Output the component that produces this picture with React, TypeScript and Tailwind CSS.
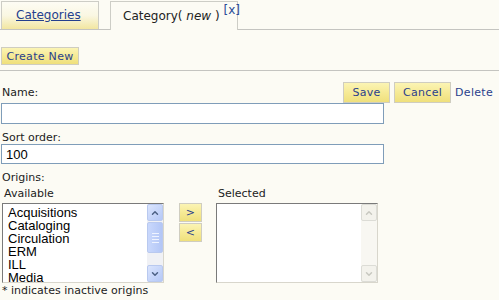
import { ChevronUp, ChevronDown } from "lucide-react";

const origins = ["Acquisitions", "Cataloging", "Circulation", "ERM", "ILL", "Media"];

function YellowButton({ label, className }: { label: string; className: string }) {
  return (
    <button
      className={`flex items-center justify-center border border-[#cfcdc0] bg-gradient-to-b from-[#fbf4b4] via-[#f6ea95] to-[#efe07c] tracking-[0.3px] text-[#2a3f8c] ${className}`}
    >
      {label}
    </button>
  );
}

function XpScrollbar({ disabled }: { disabled?: boolean }) {
  const btn = disabled
    ? "border-[#dcdcd6] bg-[#f3f2ec] text-[#c8c8c0]"
    : "border-[#b9c9ef] bg-gradient-to-br from-[#dbe5fd] to-[#b5c8f7] text-[#4d6185]";
  return (
    <div className={`flex h-full w-[16px] flex-col ${disabled ? "bg-[#f8f7f2]" : "bg-[#f0f1f5]"}`}>
      <div className={`flex h-[17px] items-center justify-center rounded-[2px] border ${btn}`}>
        <ChevronUp size={10} strokeWidth={3.5} />
      </div>
      {disabled ? (
        <div className="flex-1" />
      ) : (
        <>
          <div className="mt-px flex h-[31px] flex-col items-center justify-center gap-[2px] rounded-[2px] border border-[#b9c9ef] bg-gradient-to-r from-[#c9d8fc] to-[#b3c6f6]">
            <div className="h-px w-[7px] bg-[#eef3ff]" />
            <div className="h-px w-[7px] bg-[#eef3ff]" />
            <div className="h-px w-[7px] bg-[#eef3ff]" />
            <div className="h-px w-[7px] bg-[#eef3ff]" />
          </div>
          <div className="flex-1" />
        </>
      )}
      <div className={`flex h-[17px] items-center justify-center rounded-[2px] border ${btn}`}>
        <ChevronDown size={10} strokeWidth={3.5} />
      </div>
    </div>
  );
}

function ListBox({ items, disabled }: { items: string[]; disabled?: boolean }) {
  return (
    <div className="flex h-[80px] w-[162px] border border-t-[#7a7a7a] border-l-[#7a7a7a] border-r-[#d8d6cc] border-b-[#d8d6cc] bg-white">
      <div className="flex-1 overflow-hidden pl-[5px] pt-[2px] font-['Liberation_Sans',Arial,sans-serif] text-[13px] leading-[13px] text-black">
        {items.map((o) => (
          <div key={o}>{o}</div>
        ))}
      </div>
      <XpScrollbar disabled={disabled} />
    </div>
  );
}

export default function App() {
  return (
    <div className="relative h-[300px] w-[499px] overflow-hidden bg-[#fcfbf4] font-['DejaVu_Sans',Verdana,sans-serif] text-[11px] leading-[13px] text-[#222]">
      {/* tabs */}
      <div className="flex h-[30px] items-end border-b border-[#c4c4c0] pl-px">
        <div className="flex h-[28px] w-[98px] items-center border border-b-0 border-[#cdcdc6] bg-gradient-to-b from-[#fdfcf4] via-[#faf7e2] to-[#f2e6a0] pl-[14px]">
          <a href="#" className="text-[12px] text-[#24408e] underline">
            Categories
          </a>
        </div>
        <div className="relative -mb-px ml-[11px] flex h-[29px] w-[128px] items-center border border-b-0 border-[#cdcdc6] bg-[#fcfbf4] pl-[12px] text-[12px] text-[#222]">
          <span>
            Category( <i>new</i> )
          </span>
          <span className="absolute -right-[3px] top-[2px] text-[12px] leading-[12px] text-[#2a4c98]">[x]</span>
        </div>
      </div>

      {/* toolbar */}
      <div className="border-b border-[#c4c4c0] pb-[5px] pl-px pt-[17px]">
        <YellowButton label="Create New" className="h-[18px] w-[78px]" />
      </div>

      {/* form */}
      <div className="pl-px">
        <div className="mt-[11px] flex h-[21px] items-center">
          <div className="pl-px">Name:</div>
          <div className="ml-auto flex items-center">
            <YellowButton label="Save" className="h-[21px] w-[47px]" />
            <YellowButton label="Cancel" className="ml-[4px] h-[21px] w-[57px]" />
            <a href="#" className="ml-[4px] mr-[6px] tracking-[0.3px] text-[#2a3f8c]">
              Delete
            </a>
          </div>
        </div>
        <input className="block h-[21px] w-[383px] border border-[#7f9db9] bg-white outline-none" />
        <div className="mt-[7px] pl-px">Sort order:</div>
        <input
          defaultValue="100"
          className="block h-[20px] w-[383px] border border-[#7f9db9] bg-white px-[4px] font-['Liberation_Sans',Arial,sans-serif] text-[13px] text-black outline-none"
        />
        <div className="mt-[7px] pl-px">Origins:</div>
        <div className="mt-[3px] flex">
          <div className="pl-px">
            <div className="pl-[2px]">Available</div>
            <div className="mt-[3px]">
              <ListBox items={origins} />
            </div>
          </div>
          <div className="ml-[15px] mt-[16px] flex flex-col gap-px">
            <YellowButton label=">" className="h-[19px] w-[23px]" />
            <YellowButton label="<" className="h-[19px] w-[23px]" />
          </div>
          <div className="ml-[14px]">
            <div className="pl-[2px]">Selected</div>
            <div className="mt-[3px]">
              <ListBox items={[]} disabled />
            </div>
          </div>
        </div>
        <div className="mt-px pl-px">* indicates inactive origins</div>
      </div>
    </div>
  );
}
